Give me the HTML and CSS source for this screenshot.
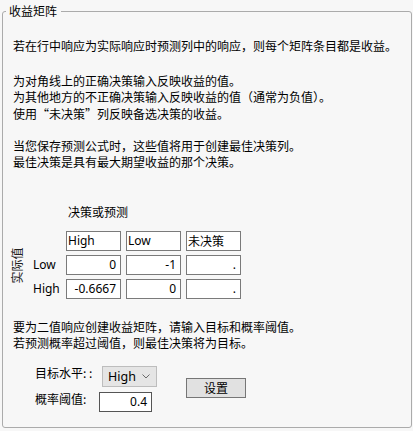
FILE: index.html
```html
<!DOCTYPE html>
<html lang="zh-CN">
<head>
<meta charset="utf-8">
<link rel="stylesheet" href="styles.css">
</head>
<body>
<fieldset class="panel">
  <legend class="panel-title">收益矩阵</legend>
  <div class="content">
    <p class="text p-first">若在行中响应为实际响应时预测列中的响应，则每个矩阵条目都是收益。</p>
    <p class="text p-second">为对角线上的正确决策输入反映收益的值。<br>为其他地方的不正确决策输入反映收益的值（通常为负值）。<br>使用“未决策”列反映备选决策的收益。</p>
    <p class="text p-third">当您保存预测公式时，这些值将用于创建最佳决策列。<br>最佳决策是具有最大期望收益的那个决策。</p>

    <div class="matrix-title">决策或预测</div>
    <div class="matrix">
      <div class="vlabel"><span>实际值</span></div>
      <div class="corner"></div>
      <div class="box head">High</div>
      <div class="box head">Low</div>
      <div class="box head cjk">未决策</div>

      <div class="rlabel">Low</div>
      <div class="box num">0</div>
      <div class="box num">-1</div>
      <div class="box num">.</div>

      <div class="rlabel">High</div>
      <div class="box num">-0.6667</div>
      <div class="box num">0</div>
      <div class="box num">.</div>
    </div>

    <p class="text p-bottom">要为二值响应创建收益矩阵，请输入目标和概率阈值。<br>若预测概率超过阈值，则最佳决策将为目标。</p>

    <div class="form">
      <div class="flabel flabel-1">目标水平: :</div>
      <div class="select"><span>High</span><svg width="8" height="5" viewBox="0 0 8 5"><path d="M0.5 0.5 L4 4 L7.5 0.5" fill="none" stroke="#6a6a6a" stroke-width="1"/></svg></div>
      <div class="button">设置</div>
      <div class="flabel flabel-2">概率阈值:</div>
      <div class="input">0.4</div>
    </div>
  </div>
</fieldset>
</body>
</html>
```
FILE: styles.css
```css
html, body {
  margin: 0;
  padding: 0;
  background: #f7f7f7;
}
body {
  font-family: "Noto Sans CJK SC", sans-serif;
  font-size: 12px;
  color: #000;
  width: 413px;
  height: 431px;
  overflow: hidden;
}
.panel {
  margin: 0 0 0 2px;
  padding: 0;
  width: 410px;
  box-sizing: border-box;
  border: 1px solid #ababab;
  border-radius: 3px;
  min-inline-size: 0;
}
.panel-title {
  margin-left: 3px;
  padding: 0 4px 0 3px;
  line-height: 22px;
  font-size: 12px;
}
.content {
  padding: 16px 10px 15px 10px;
}
.text {
  margin: 0;
  line-height: 16.5px;
  white-space: nowrap;
}
.p-first { margin-bottom: 18px; }
.p-second { margin-bottom: 15.5px; }
.matrix-title {
  margin: 33px 0 0 55px;
  line-height: 16.5px;
}
.matrix {
  margin: 10.75px 0 0 -10px;
  display: grid;
  grid-template-columns: 25px 28px 55px 55px 55px;
  grid-template-rows: 20px 20px 20px;
  column-gap: 5px;
  row-gap: 4px;
}
.vlabel {
  grid-column: 1;
  grid-row: 1 / 4;
  display: flex;
  align-items: center;
  justify-content: center;
  padding-top: 2px;
}
.vlabel span {
  display: inline-block;
  transform: rotate(-90deg);
  white-space: nowrap;
  color: #222;
}
.rlabel {
  font-family: "Noto Sans", sans-serif;
  display: flex;
  align-items: center;
  line-height: 16px;
}
.box {
  background: #fff;
  border: 1px solid #7a7a7a;
  box-sizing: border-box;
  font-family: "Noto Sans", "Noto Sans CJK SC", sans-serif;
  line-height: 18px;
  padding: 0 1px;
  white-space: nowrap;
}
.box.cjk {
  font-family: "Noto Sans CJK SC", sans-serif;
}
.box.num {
  text-align: right;
  padding-right: 4px;
}
.p-bottom {
  margin-top: 19.75px;
}
.form {
  margin: 14.25px 0 0 22px;
  display: grid;
  grid-template-columns: 64px 58px 60px;
  grid-template-rows: 21px 20px;
  row-gap: 5px;
}
.flabel {
  line-height: 14px;
  align-self: start;
  white-space: nowrap;
}
.flabel-1 { grid-column: 1; grid-row: 1; }
.flabel-2 { grid-column: 1; grid-row: 2; }
.select {
  grid-column: 2;
  grid-row: 1;
  margin-left: 3px;
  width: 55px;
  box-sizing: border-box;
  background: #e5e5e5;
  border: 1px solid #bdbdbd;
  display: flex;
  align-items: center;
  justify-content: space-between;
  padding: 0 6px 0 5px;
  font-family: "Noto Sans", sans-serif;
  font-size: 12.5px;
}
.input {
  grid-column: 2;
  grid-row: 2;
  width: 53px;
  box-sizing: border-box;
  background: #fff;
  border: 1px solid #555;
  text-align: right;
  padding-right: 4px;
  line-height: 18px;
  font-family: "Noto Sans", sans-serif;
}
.button {
  grid-column: 3;
  grid-row: 1 / 3;
  align-self: center;
  margin-left: 29px;
  width: 60px;
  height: 20px;
  box-sizing: border-box;
  background: #e1e1e1;
  border: 1px solid #767676;
  display: flex;
  align-items: center;
  justify-content: center;
  margin-top: -2px;
}
```
